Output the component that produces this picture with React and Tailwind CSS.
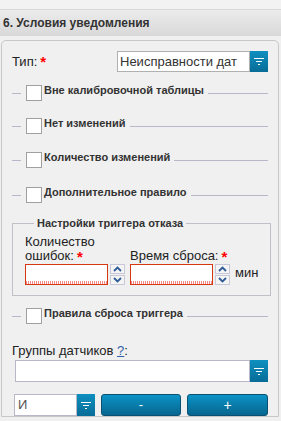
import React from 'react';

const FilterIcon = () => (
  <svg width="10" height="7" viewBox="0 0 10 7" fill="none">
    <rect x="0" y="0" width="10" height="1" fill="#fff" />
    <rect x="2" y="3" width="6" height="1" fill="#fff" />
    <rect x="4" y="6" width="2" height="1" fill="#fff" />
  </svg>
);

const DropButton = () => (
  <div className="flex h-full w-[18px] items-center justify-center bg-gradient-to-b from-[#0e90c0] to-[#086c98]">
    <FilterIcon />
  </div>
);

const Chevron = ({ up }) => (
  <svg width="9" height="6" viewBox="0 0 9 6">
    <path
      d={up ? 'M1 5 L4.5 1.5 L8 5' : 'M1 1 L4.5 4.5 L8 1'}
      stroke="#2f5c96"
      strokeWidth="1.8"
      fill="none"
    />
  </svg>
);

const Spinner = () => (
  <div className="ml-[2px] flex h-[21px] w-[15px] flex-col">
    <div className="flex h-[10px] items-center justify-center border border-[#c8c8d8] bg-[#f4f4f4]">
      <Chevron up />
    </div>
    <div className="mt-px flex h-[10px] items-center justify-center border border-[#c8c8d8] bg-[#f4f4f4]">
      <Chevron />
    </div>
  </div>
);

const Star = () => <span className="ml-[3px] text-[15px] font-bold leading-none text-[#ff0000]">*</span>;

const RedInput = () => (
  <div className="flex h-[21px] w-[83px] flex-col justify-end border border-[#d5380e] bg-white">
    <div className="h-[3px] w-full bg-[repeating-linear-gradient(90deg,#f08a8a_0px,#f08a8a_1px,transparent_1px,transparent_2px)]" />
  </div>
);

const CheckRow = ({ label, className = '' }) => (
  <div className={`flex items-center ${className}`}>
    <div className="h-px w-[9px] bg-[#b8b8c8]" />
    <div className="ml-[5px] h-[16px] w-[16px] border border-[#a0a0a0] bg-white" />
    <span className="ml-[2px] mr-[4px] -mt-[6px] text-[11px] font-bold text-[#333]">{label}</span>
    <div className="h-px flex-1 bg-[#b8b8c8]" />
  </div>
);

export default function App() {
  return (
    <div className="h-[421px] w-[281px] overflow-hidden bg-[#f0f0f0] font-['Liberation_Sans',Arial,sans-serif] text-[#222]">
      <div className="h-[10px] border-b border-[#d8d8d8] bg-[#f2f2f2]" />
      <div className="flex h-[26px] items-center bg-gradient-to-b from-[#ececec] to-[#d8d8d8] px-[3px] text-[12px] font-bold text-[#333]">
        6. Условия уведомления
      </div>
      <div className="ml-px mt-[4px] w-[278px] rounded-t-[5px] border border-[#c8c8c8] bg-[#f0f0f0] pl-[10px] pr-[10px] pt-[10px]">
        <div className="flex h-[21px] items-center">
          <span className="text-[13px]">Тип:</span>
          <Star />
          <div className="ml-auto flex h-[21px] w-[151px] items-stretch">
            <div className="flex-1 overflow-hidden whitespace-nowrap border border-[#b0b0b0] bg-white px-[2px] text-[13px] leading-[19px] text-[#333]">
              Неисправности дат
            </div>
            <DropButton />
          </div>
        </div>

        <CheckRow label="Вне калибровочной таблицы" className="mt-[13px]" />
        <CheckRow label="Нет изменений" className="mt-[17px]" />
        <CheckRow label="Количество изменений" className="mt-[18px]" />
        <CheckRow label="Дополнительное правило" className="mt-[19px]" />

        <fieldset className="mt-[12px] h-[81px] border border-[#c0c0c8] px-[12px] pb-[6px]">
          <legend className="ml-[9px] px-[3px] text-[11px] font-bold text-[#333]">Настройки триггера отказа</legend>
          <div className="mt-[3px] flex items-end">
            <div className="flex flex-col">
              <div className="text-[13px] leading-[14px]">Количество</div>
              <div className="flex items-center text-[13px] leading-[14px]">
                ошибок:
                <Star />
              </div>
              <div className="flex items-center">
                <RedInput />
                <Spinner />
              </div>
            </div>
            <div className="ml-[5px] flex flex-col">
              <div className="flex items-center text-[13px] leading-[14px]">
                Время сброса:
                <Star />
              </div>
              <div className="flex items-center">
                <RedInput />
                <Spinner />
              </div>
            </div>
            <span className="mb-[2px] ml-[5px] text-[13px]">мин</span>
          </div>
        </fieldset>

        <CheckRow label="Правила сброса триггера" className="mt-[12px]" />

        <div className="mt-[19px] text-[13px] leading-[16px]">
          Группы датчиков <span className="text-[#3060a8] underline">?</span>:
        </div>
        <div className="mt-[1px] flex h-[22px] items-stretch pl-[3px]">
          <div className="flex-1 border border-[#b8b8c8] bg-white" />
          <DropButton />
        </div>

        <div className="mt-[12px] flex h-[22px] items-stretch pl-[2px]">
          <div className="flex w-[81px] items-stretch">
            <div className="flex-1 border border-[#b8b8c8] bg-white px-[3px] text-[13px] leading-[20px] text-[#555]">И</div>
            <DropButton />
          </div>
          <button className="ml-[6px] flex w-[81px] items-center justify-center rounded-[3px] border border-[#0b4f72] bg-gradient-to-b from-[#0b93c6] to-[#08668f] text-[13px] text-white">
            -
          </button>
          <button className="ml-[6px] flex w-[81px] items-center justify-center rounded-[3px] border border-[#0b4f72] bg-gradient-to-b from-[#0b93c6] to-[#08668f] text-[14px] text-white">
            +
          </button>
        </div>
      </div>
    </div>
  );
}
